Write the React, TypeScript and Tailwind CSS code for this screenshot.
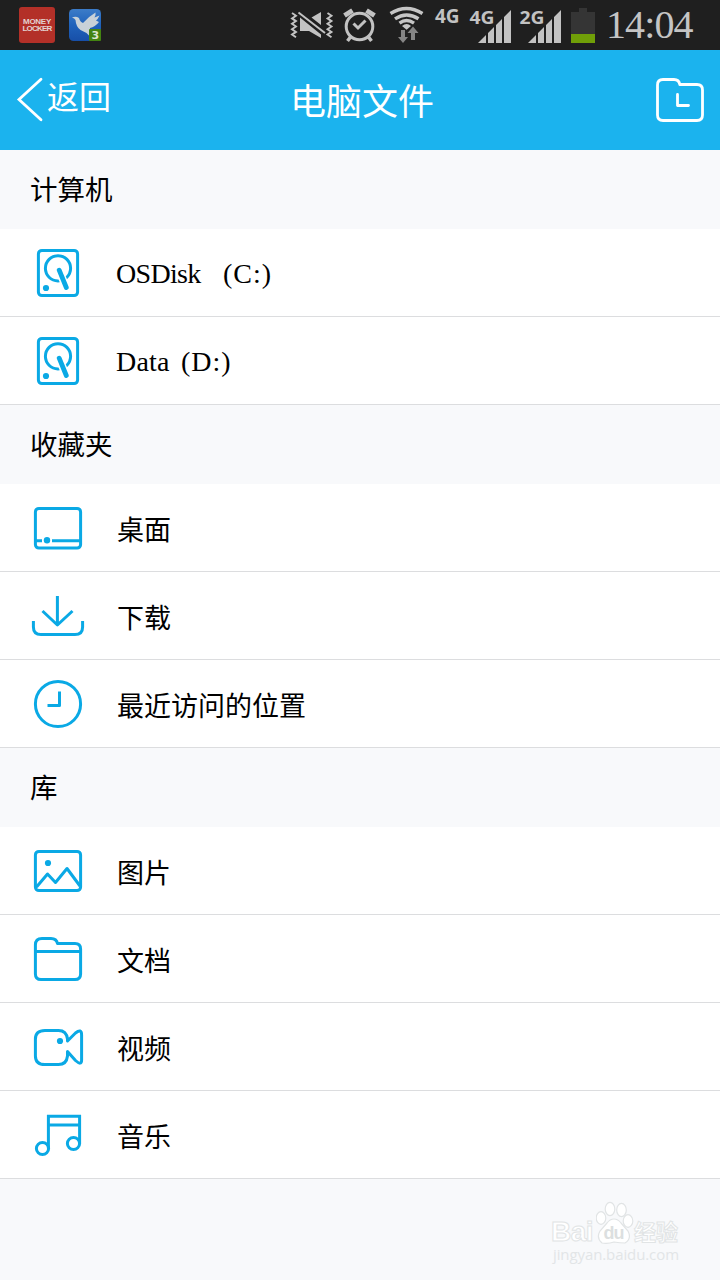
import type { ReactNode } from "react";

const kai = "font-['Noto_Sans_CJK_SC',sans-serif]";
const serif = "font-['Liberation_Serif','Noto_Sans_CJK_SC',serif]";

function MoneyLocker() {
  return (
    <div className="ml-[19px] flex h-9 w-9 flex-col items-center justify-center rounded-[3px] bg-[#b33028] font-['Liberation_Sans',sans-serif] text-[8px] font-bold leading-[7.5px] text-[#e3d3d0]">
      <span className="tracking-[-0.3px]">MONEY</span>
      <span className="tracking-[-0.8px]">LOCKER</span>
    </div>
  );
}

function BirdApp() {
  return (
    <svg className="ml-[13px] h-[50px] w-[34px]" viewBox="68 0 34 50">
      <defs>
        <linearGradient id="birdBg" x1="0" y1="0" x2="0" y2="1">
          <stop offset="0" stopColor="#3c7cc8" />
          <stop offset="0.5" stopColor="#1f62bb" />
          <stop offset="1" stopColor="#174fa8" />
        </linearGradient>
      </defs>
      <rect x="69" y="9" width="32" height="32" rx="4.5" fill="url(#birdBg)" />
      <path d="M72 17.500Q76 16 79 18Q80 22 83 23Q88 17 95.500 12.500Q96 15 94.500 17.500L99.500 15.500Q98 19 96 20.500L99 22Q95 27 90 28L89.500 36Q86 32 80.500 30Q76 27 75.500 20Q74.500 18 72 17.500Z" fill="#c8d1d8" />
      <rect x="89" y="29" width="12" height="12" rx="1" fill="#438411" />
      <text x="91.500" y="39" fontSize="11" fontWeight="bold" fill="#dbe5cf" fontFamily="DejaVu Sans">3</text>
    </svg>
  );
}

function Vibrate() {
  return (
    <svg className="ml-[188px] h-[50px] w-[44px]" viewBox="290 0 44 50" fill="none" stroke="#c2c2c2">
      <path d="M292 13l4 2.7-4 2.7 4 2.7-4 2.7 4 2.7-4 2.7 4 2.7-4 2.7 4 2.7M327.500 13l4 2.7-4 2.7 4 2.7-4 2.7 4 2.7-4 2.7 4 2.7-4 2.7 4 2.7" strokeWidth="1.900" />
      <path d="M300 17.500L321 34.500V38L309 31H300ZM311.500 17.500L321 12V25Z" fill="#c2c2c2" stroke="none" />
      <path d="M298.500 12.500L325 33" strokeWidth="2" />
    </svg>
  );
}

function Alarm() {
  return (
    <svg className="ml-[8px] h-[50px] w-[34px]" viewBox="342 0 34 50" fill="none" stroke="#c2c2c2">
      <circle cx="359.500" cy="26.500" r="13.300" strokeWidth="3" />
      <path d="M353.500 23.500l4.500 4.500 7.500-7.500" strokeWidth="3" />
      <path d="M344.500 15.500l8-5M366.500 10.500l8 5" strokeWidth="5" />
      <path d="M350.500 37l-3 4M368.500 37l3 4" strokeWidth="3.500" />
    </svg>
  );
}

function Wifi() {
  return (
    <svg className="ml-[13px] h-[50px] w-[36px]" viewBox="389 0 36 50" fill="none" stroke="#c5c5c5">
      <path d="M390.500 13.500Q406.500 3.500 422.500 13.500M395 18.800Q406.500 11 418.500 18.800M399.500 23.200Q406.500 18 414 23.200" strokeWidth="3.400" />
      <path d="M402 26Q406.700 22.200 411 26L406.600 29.700Z" fill="#c5c5c5" stroke="none" />
      <path d="M401 30h4v7h3l-5 6-5-6h3ZM411 40h4v-7h3.500l-5.500-6.500-5.500 6.500h3.500Z" fill="#858585" stroke="none" />
    </svg>
  );
}

function Signal({ label }: { label: string }) {
  return (
    <svg className="h-[50px] w-[44px]" viewBox="468 0 44 50" fill="#c2c2c2">
      <text x="469.500" y="24" fontSize="18" fontWeight="bold" fontFamily="Open Sans" textLength="25" lengthAdjust="spacingAndGlyphs">{label}</text>
      <path d="M478 43L486 35V43ZM488 33L494 27V43H488ZM496 25L502 19V43H496ZM504 17L511 10V43H504Z" />
    </svg>
  );
}

function Battery() {
  return (
    <svg className="ml-[9px] h-[50px] w-6" viewBox="571 0 24 50">
      <path d="M571 12H579V8H587V12H595V34H571Z" fill="#353535" />
      <path d="M571 34H595V43H571Z" fill="#709f08" />
    </svg>
  );
}

function StatusBar() {
  return (
    <div className="flex h-[50px] items-center bg-[#1f1f1f]">
      <MoneyLocker />
      <BirdApp />
      <Vibrate />
      <Alarm />
      <Wifi />
      <span className="ml-[10px] w-[33px] pb-[18px] font-['Open_Sans',sans-serif] text-[19px] font-bold leading-4 text-[#c2c2c2]">4G</span>
      <Signal label="4G" />
      <div className="ml-[6px] flex"><Signal label="2G" /></div>
      <Battery />
      <span className={`ml-[11px] ${serif} text-[40px] leading-[50px] tracking-[-0.9px] text-[#c4c4c4]`}>14:04</span>
    </div>
  );
}

function Header() {
  return (
    <div className="flex h-[100px] bg-[#1bb3ee] text-white">
      <svg className="ml-4 h-[100px] w-[31px] shrink-0" viewBox="16 50 31 100" fill="none" stroke="white" strokeWidth="2.800" strokeLinecap="round">
        <path d="M41 79.300L19 99.500L41 119.700" />
      </svg>
      <span className={`w-[243px] ${kai} text-[32px] leading-[90px]`}>返回</span>
      <span className={`w-[364px] ${kai} text-[36px] leading-[99px]`}>电脑文件</span>
      <svg className="h-[100px] w-[52px] shrink-0" viewBox="654 50 52 100" fill="none" stroke="white" strokeWidth="2.800" strokeLinecap="round" strokeLinejoin="round">
        <path d="M657.500 85Q657.500 79.500 663 79.500H674Q679 79.500 679.800 84.500H697Q702.500 84.500 702.500 90V115Q702.500 120.500 697 120.500H663Q657.500 120.500 657.500 115Z" />
        <path d="M677.500 94.500V105.500H688.500" />
      </svg>
    </div>
  );
}

const icons: Record<string, ReactNode> = {
  disk: (
    <>
      <rect x="38.400" y="21.400" width="39.200" height="45.200" rx="3.500" />
      <circle cx="58" cy="39.300" r="12.600" />
      <path d="M60 44L67 60" stroke="white" strokeWidth="8" />
      <path d="M59.200 41.200L66.300 58.500" strokeWidth="4.800" strokeLinecap="round" />
      <circle cx="46" cy="59" r="3.100" fill="#0aa9e5" stroke="none" />
    </>
  ),
  desktop: (
    <>
      <rect x="35.400" y="24.400" width="45.200" height="39.700" rx="3.500" />
      <path d="M35 56.700H42M52 56.700H80" />
      <circle cx="47" cy="56.200" r="3.200" fill="#0aa9e5" stroke="none" />
    </>
  ),
  download: <path d="M57.400 24V53M42.500 39L57.400 53L72.500 39M33.400 49V55Q33.400 62.500 41 62.500H75Q82.600 62.500 82.600 55V49" />,
  recent: (
    <>
      <circle cx="58" cy="44" r="22.600" />
      <path d="M59.500 31.500V45.600H47.500" />
    </>
  ),
  picture: (
    <>
      <rect x="35.400" y="24.400" width="45.200" height="39.200" rx="3.500" />
      <path d="M36.500 60L47.500 47L55.500 55.500L67 41.500L80 59" />
      <circle cx="48" cy="36" r="3.100" fill="#0aa9e5" stroke="none" />
    </>
  ),
  folder: (
    <path d="M35.400 30Q35.400 23.400 42 23.400H51Q56.500 23.400 57.500 28.500H75Q80.600 28.500 80.600 34V59Q80.600 64.600 75 64.600H41Q35.400 64.600 35.400 59ZM35.400 36.500H80.600" />
  ),
  video: (
    <>
      <path d="M67.500 38V36Q66.500 27.400 58.500 27.400H45Q35.400 27.400 35.400 36V53Q35.400 61.600 45 61.600H58.500Q66.500 61.600 67.500 53V48.500L75.500 57.500Q81.600 63 81.600 57V32Q81.600 25 75.500 30Z" />
      <circle cx="60" cy="38" r="3.100" fill="#0aa9e5" stroke="none" />
    </>
  ),
  music: (
    <>
      <path d="M48.400 57.500V25.300H79.600V52.500M48.400 34H79.600" strokeLinejoin="miter" />
      <circle cx="42.500" cy="57.500" r="6.100" />
      <circle cx="73.500" cy="52.500" r="6.100" />
    </>
  ),
};

function Row({ icon, children }: { icon: string; children: ReactNode }) {
  return (
    <div className="flex h-[88px] items-center border-b border-[#dcdddf] bg-white pl-7 text-black">
      <svg className="h-[87px] w-[60px]" viewBox="28 0 60 87" fill="none" stroke="#0aa9e5" strokeWidth="3" strokeLinecap="butt" strokeLinejoin="round">
        {icons[icon]}
      </svg>
      {children}
    </div>
  );
}

function Drive({ name, letter, nameStyle }: { name: string; letter: string; nameStyle: string }) {
  return (
    <div className={`ml-[28px] flex ${serif} pt-[2px] text-[28px] leading-8`}>
      <span className={nameStyle}>{name}</span>
      <span className="tracking-[1px]">{letter}</span>
    </div>
  );
}

function Label({ children }: { children: string }) {
  return <span className={`ml-[29px] ${kai} pt-[2px] text-[27px] leading-8`}>{children}</span>;
}

function Section({ children }: { children: string }) {
  return <div className={`h-[79px] bg-[#f8f9fb] pl-[30px] ${kai} text-[27.500px] leading-[77px] text-black`}>{children}</div>;
}

function Watermark() {
  return (
    <div className="ml-[551px] w-[132px] pt-[20px]">
      <div className="flex h-[46px] text-white">
        <span className="w-[45px] pt-[17px] font-['Liberation_Sans',sans-serif] text-[28px] font-bold leading-8 tracking-[-0.5px] [-webkit-text-stroke:1px_#e1e4e5]">Bai</span>
        <svg className="h-[46px] w-[38px]" viewBox="596 1199 38 46" fill="white" stroke="#e1e4e5" strokeWidth="1.200">
          <path d="M614 1219Q618 1219 621 1223L628 1231Q632 1239 625 1243Q620 1243 614 1242Q608 1244 602 1243Q596 1238 600 1231L607 1223Q610 1219 614 1219Z" />
          <ellipse cx="601" cy="1218" rx="4.800" ry="6.300" />
          <ellipse cx="610" cy="1209" rx="4.800" ry="6.600" />
          <ellipse cx="621.500" cy="1210" rx="4.800" ry="6.600" />
          <ellipse cx="628" cy="1221" rx="4.800" ry="6.300" />
          <text x="603.500" y="1239" fontSize="18" fontWeight="bold" fontFamily="Liberation Sans" textLength="21" fill="#dcdfe0" stroke="none">du</text>
        </svg>
        <span className={`${kai} pt-[18px] text-[22px] font-bold leading-[26px] [-webkit-text-stroke:1px_#e1e4e5]`}>经验</span>
      </div>
      <div className="whitespace-nowrap pl-[2px] font-['Open_Sans',sans-serif] text-[15px] leading-[18px] tracking-[-0.1px] text-[#e2e5e7]">jingyan.baidu.com</div>
    </div>
  );
}

export default function App() {
  return (
    <div className="h-[1280px] w-[720px] overflow-hidden bg-[#f8f9fb]">
      <StatusBar />
      <Header />
      <Section>计算机</Section>
      <Row icon="disk"><Drive name="OSDisk" letter="(C:)" nameStyle="w-[107px] tracking-[-0.7px]" /></Row>
      <Row icon="disk"><Drive name="Data" letter="(D:)" nameStyle="w-[65px] tracking-[0.2px]" /></Row>
      <Section>收藏夹</Section>
      <Row icon="desktop"><Label>桌面</Label></Row>
      <Row icon="download"><Label>下载</Label></Row>
      <Row icon="recent"><Label>最近访问的位置</Label></Row>
      <Section>库</Section>
      <Row icon="picture"><Label>图片</Label></Row>
      <Row icon="folder"><Label>文档</Label></Row>
      <Row icon="video"><Label>视频</Label></Row>
      <Row icon="music"><Label>音乐</Label></Row>
      <Watermark />
    </div>
  );
}
